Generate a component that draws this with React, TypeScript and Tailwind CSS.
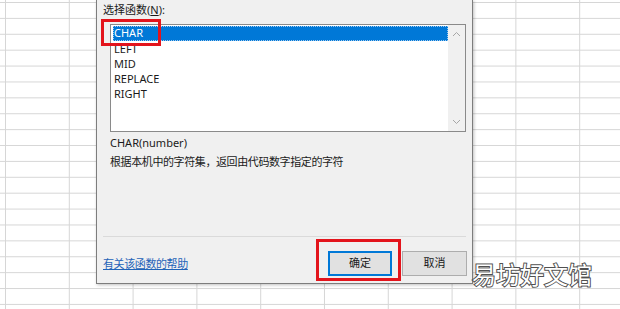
import React from "react";

const FUNCS = ["CHAR", "LEFT", "MID", "REPLACE", "RIGHT"];

const ChevronUp = () => (
  <svg width="9" height="6" viewBox="0 0 9 6" fill="none">
    <path d="M1 5 L4.5 1.5 L8 5" stroke="#a6a6a6" strokeWidth="1" />
  </svg>
);

const ChevronDown = () => (
  <svg width="9" height="6" viewBox="0 0 9 6" fill="none">
    <path d="M1 1 L4.5 4.5 L8 1" stroke="#a6a6a6" strokeWidth="1" />
  </svg>
);

export default function App() {
  return (
    <div className="relative w-[620px] h-[309px] overflow-hidden bg-white bg-[linear-gradient(to_right,#d6d6d6_1px,transparent_1px),linear-gradient(to_bottom,#d6d6d6_1px,transparent_1px)] bg-[length:63.8px_15.9px] bg-[position:5px_2px] font-['Noto_Sans','Noto_Sans_CJK_SC',sans-serif] text-[11px] text-[#1a1a1a]">
      {/* dialog */}
      <div className="absolute left-[96px] top-0 w-[377px] h-[284px] bg-[#f0f0f0] border-x border-b border-[#7d7d7d] shadow-[1px_1px_3px_rgba(0,0,0,0.25)] flex flex-col">
        <div className="pl-[6px] pt-[2px] h-[17px] leading-[15px]">
          选择函数(<span className="underline">N</span>):
        </div>

        <div className="ml-[13px] mt-[7px] w-[356px] h-[108px] border border-[#8a8a8a] bg-white flex">
          <div className="flex-1 pt-[1px] pl-[2px]">
            {FUNCS.map((f, i) => (
              <div
                key={f}
                className={
                  i === 0
                    ? "h-[15px] leading-[14px] pl-[1px] bg-[#0078d7] text-white outline-1 outline-dotted outline-[#9ec9f0] -outline-offset-1"
                    : "h-[15px] leading-[15px] pl-[1px]"
                }
              >
                {f}
              </div>
            ))}
          </div>
          <div className="w-[17px] bg-[#f0f0f0] flex flex-col items-center justify-between py-[6px]">
            <ChevronUp />
            <ChevronDown />
          </div>
        </div>

        <div className="pl-[13px] mt-[3px] leading-[15px]">CHAR(number)</div>
        <div className="pl-[13px] mt-[4px] leading-[15px] tracking-[-0.4px]">
          根据本机中的字符集，返回由代码数字指定的字符
        </div>

        <div className="mx-[6px] mt-[67px] h-px bg-[#dadada]" />

        <div className="flex items-center pl-[6px] pr-[5px] mt-[14px]">
          <a className="text-[#1f63b8] underline leading-[15px] tracking-[-0.4px] cursor-pointer">
            有关该函数的帮助
          </a>
          <div className="ml-auto flex gap-[10px]">
            <button className="w-[64px] h-[25px] bg-[#e1e1e1] border-2 border-[#0078d7] text-[11px]">
              确定
            </button>
            <button className="w-[65px] h-[25px] bg-[#e1e1e1] border border-[#adadad] text-[11px]">
              取消
            </button>
          </div>
        </div>
      </div>

      {/* red highlight boxes */}
      <div className="absolute left-[101px] top-[19px] w-[60px] h-[27px] border-[3px] border-[#e3141c]" />
      <div className="absolute left-[316px] top-[239px] w-[85px] h-[42px] border-[3px] border-[#e3141c]" />

      {/* watermark */}
      <div className="absolute left-[472px] top-[259px] text-[24px] leading-[30px] text-white font-['Noto_Sans_CJK_SC',sans-serif] [-webkit-text-stroke:2px_#505050] [paint-order:stroke_fill]">
        易坊好文馆
      </div>
    </div>
  );
}
